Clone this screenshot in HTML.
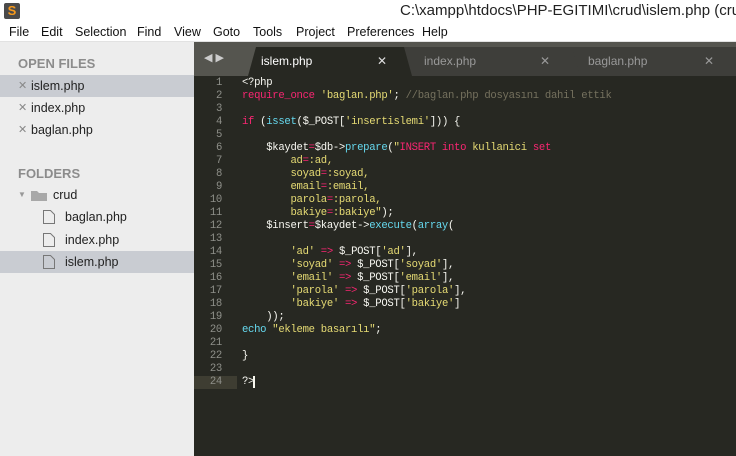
<!DOCTYPE html>
<html><head><meta charset="utf-8"><style>
*{margin:0;padding:0;box-sizing:border-box}
body{width:736px;height:456px;overflow:hidden;background:#fff;font-family:"Liberation Sans",sans-serif;position:relative}
.title{position:absolute;top:0;left:0;width:736px;height:22px;background:#fff}
.title .t{position:absolute;left:400px;top:2px;font-size:15px;color:#222;white-space:nowrap}
.logo{position:absolute;left:4px;top:3px;width:16px;height:16px;background:#4a4a4a;border-radius:2px;color:#f89a1c;font-weight:bold;font-size:13px;text-align:center;line-height:16px}
.menu{position:absolute;top:22px;left:0;width:736px;height:20px;background:#fff;border-bottom:1px solid #e2e2e2;font-size:12.5px;color:#111}
.menu span{position:absolute;top:3px}
.side{position:absolute;top:42px;left:0;width:194px;height:414px;background:#ededed}
.side .h{position:absolute;left:18px;font-size:13px;font-weight:bold;color:#8c8c8c}
.row{position:absolute;left:0;width:194px;height:22px;font-size:12.5px;color:#222;line-height:22px}
.row .x{position:absolute;left:18px;color:#888;font-size:11px}
.sel{background:#c9ccd2}
.ed{position:absolute;left:194px;top:42px;width:542px;height:414px;background:#272822}
.tabs{position:absolute;left:0;top:0;width:542px;height:34px;background:#55554f}
.tab{position:absolute;top:5px;height:29px;font-size:12px;line-height:29px}
.code{position:absolute;left:0;top:34px;font-family:"Liberation Mono",monospace;font-size:10.6px;letter-spacing:-0.3px;line-height:13px;color:#f8f8f2;white-space:pre}
.ln{position:absolute;left:0;width:28px;text-align:right;color:#8f908a}
.cl{position:absolute;left:48px}
.k{color:#f92672}.s{color:#e6db74}.c{color:#75715e}.f{color:#66d9ef}
</style></head><body>
<div class="title"><div class="logo">S</div><div class="t">C:\xampp\htdocs\PHP-EGITIMI\crud\islem.php (crud</div></div>
<div class="menu"><span style="left:9px">File</span><span style="left:41px">Edit</span><span style="left:75px">Selection</span><span style="left:137px">Find</span><span style="left:174px">View</span><span style="left:213px">Goto</span><span style="left:253px">Tools</span><span style="left:296px">Project</span><span style="left:347px">Preferences</span><span style="left:422px">Help</span></div>
<div class="side">
<div class="h" style="top:14px">OPEN FILES</div>
<div class="row sel" style="top:33px"><span class="x">✕</span><span style="position:absolute;left:31px">islem.php</span></div>
<div class="row" style="top:55px"><span class="x">✕</span><span style="position:absolute;left:31px">index.php</span></div>
<div class="row" style="top:77px"><span class="x">✕</span><span style="position:absolute;left:31px">baglan.php</span></div>
<div class="h" style="top:124px">FOLDERS</div>
<div class="row" style="top:142px"><span style="position:absolute;left:18px;color:#999;font-size:8px">▼</span><svg style="position:absolute;left:31px;top:6px" width="16" height="11"><path d="M0 1h6l2 2h8v8H0z" fill="#a8a8a8"/></svg><span style="position:absolute;left:53px">crud</span></div>
<div class="row" style="top:164px"><svg style="position:absolute;left:43px;top:4px" width="12" height="14"><path d="M.5 .5h7l4 4v9H.5z" fill="none" stroke="#777"/></svg><span style="position:absolute;left:65px">baglan.php</span></div>
<div class="row" style="top:187px"><svg style="position:absolute;left:43px;top:4px" width="12" height="14"><path d="M.5 .5h7l4 4v9H.5z" fill="none" stroke="#777"/></svg><span style="position:absolute;left:65px">index.php</span></div>
<div class="row sel" style="top:209px"><svg style="position:absolute;left:43px;top:4px" width="12" height="14"><path d="M.5 .5h7l4 4v9H.5z" fill="none" stroke="#777"/></svg><span style="position:absolute;left:65px">islem.php</span></div>
</div>
<div class="ed">
<div class="tabs">
<span style="position:absolute;left:10px;top:9px;color:#ccc;font-size:11px">◀ ▶</span>
<svg style="position:absolute;left:0;top:0" width="542" height="34">
<path d="M570 34 L563 5 H370 L378 34Z" fill="#3e3e3a"/>
<path d="M386 34 L378 5 H210 L202 34Z" fill="#3e3e3a"/>
<path d="M218 34 L210 5 H62 L54 34Z" fill="#272822"/>
</svg>
<div class="tab" style="left:67px;color:#fff">islem.php</div><div class="tab" style="left:183px;color:#ddd">✕</div>
<div class="tab" style="left:230px;color:#999">index.php</div><div class="tab" style="left:346px;color:#999">✕</div>
<div class="tab" style="left:394px;color:#999">baglan.php</div><div class="tab" style="left:510px;color:#999">✕</div>
</div>
<div style="position:absolute;left:0;top:334px;width:43px;height:13px;background:#3e3d32"></div>
<div class="code">
<div class="ln" style="top:1px">1
2
3
4
5
6
7
8
9
10
11
12
13
14
15
16
17
18
19
20
21
22
23
24</div>
<div class="cl" style="top:1px">&lt;?php
<span class="k">require_once</span> <span class="s">'baglan.php'</span>; <span class="c">//baglan.php dosyasını dahil ettik</span>

<span class="k">if</span> (<span class="f">isset</span>($_POST[<span class="s">'insertislemi'</span>])) {

    $kaydet<span class="k">=</span>$db-&gt;<span class="f">prepare</span>(<span class="s">"</span><span class="k">INSERT into</span> <span class="s">kullanici</span> <span class="k">set</span>
        <span class="s">ad</span><span class="k">=</span><span class="s">:ad,
        soyad</span><span class="k">=</span><span class="s">:soyad,
        email</span><span class="k">=</span><span class="s">:email,
        parola</span><span class="k">=</span><span class="s">:parola,
        bakiye</span><span class="k">=</span><span class="s">:bakiye"</span>);
    $insert<span class="k">=</span>$kaydet-&gt;<span class="f">execute</span>(<span class="f">array</span>(

        <span class="s">'ad'</span> <span class="k">=&gt;</span> $_POST[<span class="s">'ad'</span>],
        <span class="s">'soyad'</span> <span class="k">=&gt;</span> $_POST[<span class="s">'soyad'</span>],
        <span class="s">'email'</span> <span class="k">=&gt;</span> $_POST[<span class="s">'email'</span>],
        <span class="s">'parola'</span> <span class="k">=&gt;</span> $_POST[<span class="s">'parola'</span>],
        <span class="s">'bakiye'</span> <span class="k">=&gt;</span> $_POST[<span class="s">'bakiye'</span>]
    ));
<span class="f">echo</span> <span class="s">"ekleme basarılı"</span>;

}

?&gt;<span style="border-left:2px solid #f8f8f0;margin-left:-1px"> </span></div>
</div>
</div>
</body></html>
